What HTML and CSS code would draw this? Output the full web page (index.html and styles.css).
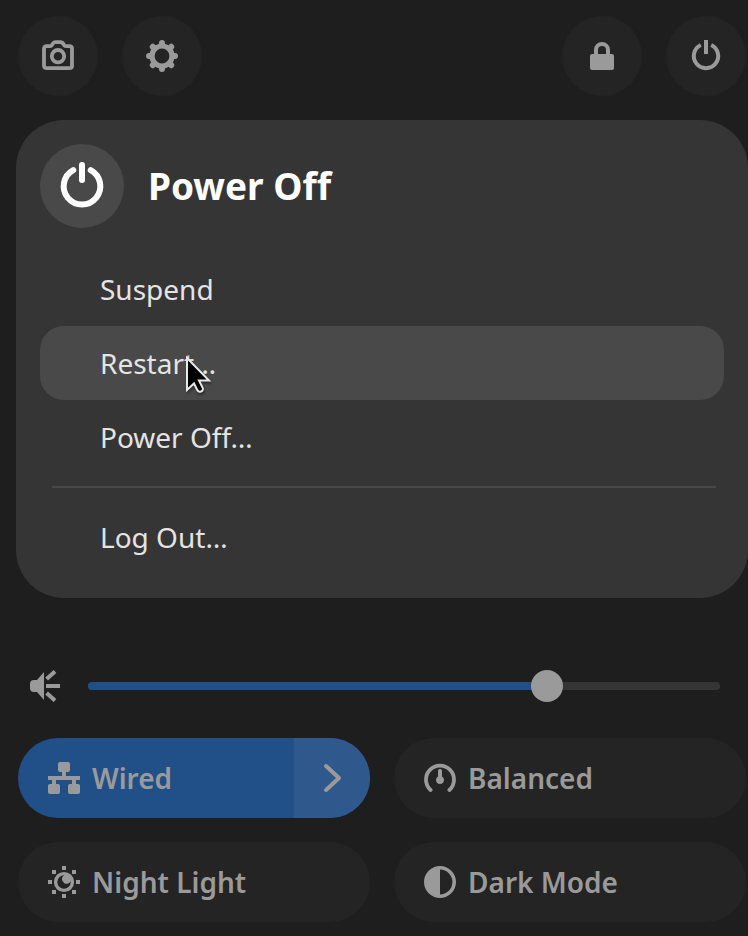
FILE: index.html
```html
<!DOCTYPE html>
<html lang="en">
<head>
<meta charset="utf-8">
<meta name="viewport" content="width=device-width, initial-scale=1">
<title>Quick Settings</title>
<link rel="stylesheet" href="styles.css">
</head>
<body>
<main class="panel">
  <header class="toolbar">
    <button class="round" type="button" aria-label="Take screenshot">
      <svg class="icon" viewBox="0 0 16 16"><path fill="none" stroke="currentColor" stroke-width="1.9" stroke-linejoin="round" d="M2.300 3.100H3.800Q4.500 3.100 4.900 2.600L5.700 1.500Q6 1.100 6.700 1.100H9.300Q10 1.100 10.300 1.500L11.100 2.600Q11.500 3.100 12.200 3.100H13.700Q15 3.100 15 4.400V12.900Q15 14.100 13.700 14.100H2.300Q1 14.100 1 12.900V4.400Q1 3.100 2.300 3.100Z"/><circle cx="8" cy="8.100" r="3.100" fill="none" stroke="currentColor" stroke-width="1.900"/></svg>
    </button>
    <button class="round" type="button" aria-label="Settings">
      <svg class="icon" viewBox="0 0 16 16"><circle cx="8" cy="8" r="5" fill="none" stroke="currentColor" stroke-width="2.600"/><path stroke="currentColor" stroke-width="3" stroke-linecap="round" d="M8 1.500V2.500M8 13.500V14.500M1.500 8H2.500M13.500 8H14.500M3.400 3.400L4 4M12 12L12.600 12.600M12.600 3.400L12 4M4 12L3.400 12.600"/></svg>
    </button>
    <span class="spacer"></span>
    <button class="round" type="button" aria-label="Lock screen">
      <svg class="icon" viewBox="0 0 16 16"><path fill="none" stroke="currentColor" stroke-width="2" d="M5 8V5A3 3 0 0 1 11 5V8"/><path fill="currentColor" d="M3 7H13Q14 7 14 8V14Q14 15 13 15H3Q2 15 2 14V8Q2 7 3 7Z"/></svg>
    </button>
    <button class="round" type="button" aria-label="Power menu">
      <svg class="icon" viewBox="0 0 16 16"><path fill="none" stroke="currentColor" stroke-width="2" d="M5.400 2.500A6.100 6.100 0 1 0 10.600 2.500"/><path stroke="currentColor" stroke-width="2" d="M8 0V7"/></svg>
    </button>
  </header>

  <section class="menu" aria-labelledby="menu-title">
    <div class="menu-head">
      <span class="badge">
        <svg class="icon icon-large" viewBox="0 0 16 16"><path fill="none" stroke="currentColor" stroke-width="2" stroke-linecap="round" d="M5.100 2.700A6.100 6.100 0 1 0 10.900 2.700M8 1V6"/></svg>
      </span>
      <h1 class="menu-title" id="menu-title">Power Off</h1>
    </div>
    <button class="item" type="button">Suspend</button>
    <button class="item item-active" type="button">Restart…
      <svg class="pointer" viewBox="0 0 28 42"><path fill="#000" stroke="#e8e8e8" stroke-width="2" d="M2 4V36L9 29.500L12.500 36.500Q15 39 17.500 36.500Q18.500 35 17.500 33.500L14 26.500H24Z"/></svg>
    </button>
    <button class="item" type="button">Power Off…</button>
    <hr class="rule">
    <button class="item" type="button">Log Out…</button>
  </section>

  <div class="volume">
    <label class="volume-label" for="volume" aria-label="Volume">
      <svg class="icon" viewBox="0 0 16 16"><path fill="currentColor" d="M7 1V15L3.500 11H2Q0 11 0 9V7Q0 5 2 5H3.500Z"/><path stroke="currentColor" stroke-width="2" d="M8.300 4.500L12.500 .700M8 8H15M8.300 11.500L12.500 15.300"/></svg>
    </label>
    <input class="slider" id="volume" type="range" min="0" max="1000" value="738">
  </div>

  <div class="tiles">
    <div class="tile tile-on">
      <button class="tile-main" type="button">
        <svg class="icon" viewBox="0 0 16 16"><path fill="currentColor" d="M6 0H10Q11 0 11 1V4Q11 5 10 5H9V7H16V9H14V11H15Q16 11 16 12V15Q16 16 15 16H11Q10 16 10 15V12Q10 11 11 11H12V9H4V11H5Q6 11 6 12V15Q6 16 5 16H1Q0 16 0 15V12Q0 11 1 11H2V9H0V7H7V5H6Q5 5 5 4V1Q5 0 6 0Z"/></svg>
        <span>Wired</span>
      </button>
      <button class="tile-more" type="button" aria-label="Open wired menu">
        <svg class="icon" viewBox="0 0 16 16"><path fill="none" stroke="currentColor" stroke-width="2" stroke-linecap="round" stroke-linejoin="round" d="M5 2L11.500 8L5 14"/></svg>
      </button>
    </div>
    <div class="tile">
      <button class="tile-main" type="button">
        <svg class="icon" viewBox="0 0 16 16"><path fill="none" stroke="currentColor" stroke-width="1.900" stroke-linecap="round" d="M3.300 14A7 7 0 1 1 12.700 14"/><path fill="currentColor" d="M7 4Q8 3 9 4V7.300A2 2 0 1 1 7 7.300Z"/></svg>
        <span>Balanced</span>
      </button>
    </div>
    <div class="tile">
      <button class="tile-main" type="button">
        <svg class="icon" viewBox="0 0 16 16"><path fill="currentColor" d="M7 0H9V2H7ZM7 14H9V16H7ZM0 7H2V9H0ZM14 7H16V9H14ZM2 2H4V4H2ZM12 2H14V4H12ZM2 12H4V14H2ZM12 12H14V14H12Z"/><circle cx="8" cy="8" r="4.200" fill="none" stroke="currentColor" stroke-width="1.700"/><path fill="currentColor" d="M8.200 4.500A2.300 2.300 0 0 0 8.200 8.600A2.300 2.300 0 0 0 11.500 7.500L11 4.500Z"/></svg>
        <span>Night Light</span>
      </button>
    </div>
    <div class="tile">
      <button class="tile-main" type="button">
        <svg class="icon" viewBox="0 0 16 16"><circle cx="8" cy="8" r="7.100" fill="none" stroke="currentColor" stroke-width="1.800"/><path fill="currentColor" d="M8 1A7 7 0 0 0 8 15Z"/></svg>
        <span>Dark Mode</span>
      </button>
    </div>
  </div>
</main>
</body>
</html>
```
FILE: styles.css
```css
* {
  box-sizing: border-box;
}

body {
  margin: 0;
  background: #1e1e1e;
  color: #9a9a9a;
  font-family: "Noto Sans", "Open Sans", sans-serif;
}

button {
  margin: 0;
  padding: 0;
  border: 0;
  background: none;
  color: inherit;
  font: inherit;
  text-align: left;
}

.panel {
  padding: 16px 0 14px;
}

.icon {
  display: block;
  flex: none;
  width: 32px;
  height: 32px;
}

.toolbar {
  display: flex;
  gap: 24px;
  padding: 0 2px 0 18px;
}

.spacer {
  flex: 1;
}

.round {
  display: grid;
  place-items: center;
  width: 80px;
  height: 80px;
  border-radius: 50%;
  background: #242424;
}

.menu {
  margin: 24px 0 0 16px;
  padding: 24px;
  border-radius: 48px;
  background: #353535;
  color: #e4e4e4;
}

.menu-head {
  display: flex;
  align-items: center;
  gap: 24px;
  margin-bottom: 24px;
}

.badge {
  display: grid;
  place-items: center;
  width: 84px;
  height: 84px;
  border-radius: 50%;
  background: #494949;
  color: #fff;
}

.icon-large {
  width: 48px;
  height: 48px;
}

.menu-title {
  margin: 0;
  color: #fff;
  font-size: 37px;
  font-weight: 700;
  line-height: 44px;
}

.item {
  position: relative;
  display: block;
  width: 100%;
  height: 74px;
  padding: 0 60px;
  border-radius: 24px;
  font-size: 28px;
  line-height: 40px;
}

.item-active {
  background: #494949;
}

.pointer {
  position: absolute;
  top: 28px;
  left: 145px;
  width: 28px;
  height: 42px;
  filter: drop-shadow(1px 2px 1px rgba(0, 0, 0, 0.4));
}

.rule {
  height: 2px;
  margin: 12px 8px 12px 12px;
  border: 0;
  background: #484848;
}

.volume {
  display: flex;
  align-items: center;
  gap: 26px;
  margin: 72px 28px 36px 30px;
}

.volume-label {
  display: block;
}

.slider {
  flex: 1;
  min-width: 0;
  height: 32px;
  margin: 0;
  appearance: none;
  background: none;
}

.slider::-webkit-slider-runnable-track {
  height: 8px;
  border-radius: 4px;
  background: linear-gradient(to right, #215089 73%, #353535 73%);
}

.slider::-webkit-slider-thumb {
  appearance: none;
  width: 32px;
  height: 32px;
  margin-top: -12px;
  border-radius: 50%;
  background: #9a9a9a;
}

.tiles {
  display: grid;
  grid-template-columns: 1fr 1fr;
  gap: 24px;
  padding: 0 2px 0 18px;
}

.tile {
  display: flex;
  height: 80px;
  overflow: hidden;
  border-radius: 40px;
  background: #242424;
  font-size: 28px;
  font-weight: 600;
  line-height: 40px;
}

.tile-on {
  background: #215089;
}

.tile-main {
  display: flex;
  flex: 1;
  align-items: center;
  gap: 12px;
  padding-left: 30px;
}

.tile-more {
  display: grid;
  place-items: center;
  width: 76px;
  background: #2f598d;
}
```
